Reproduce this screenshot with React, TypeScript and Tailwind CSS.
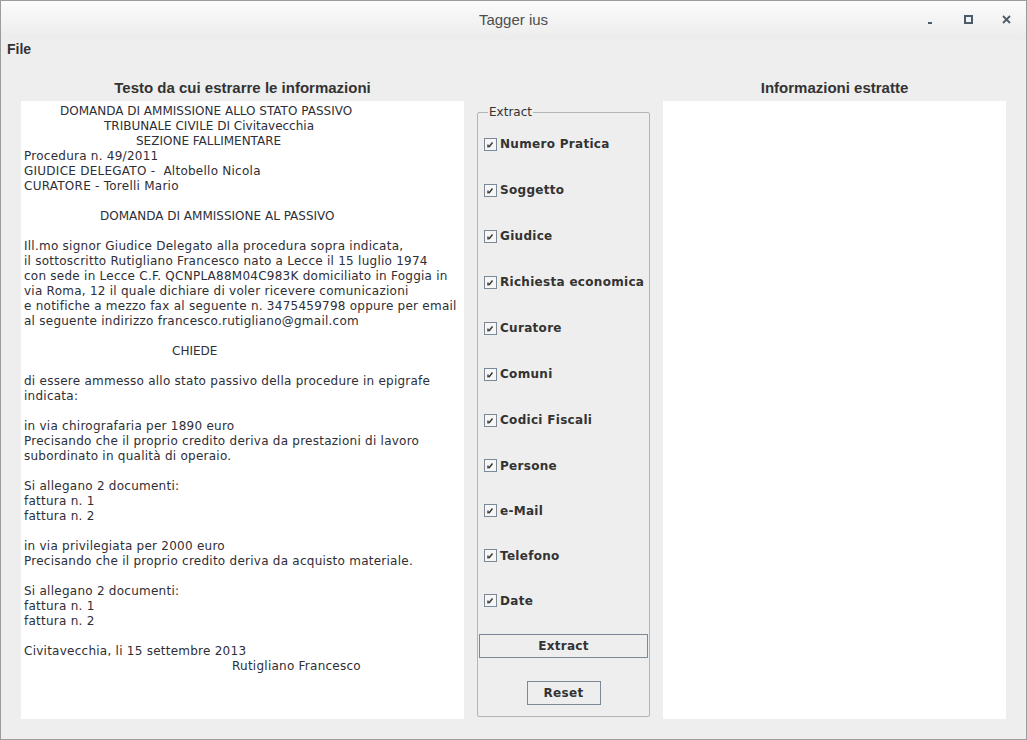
import React from 'react';

const docLines: { text: string; indent?: number; caps?: boolean }[] = [
    { text: 'DOMANDA DI AMMISSIONE ALLO STATO PASSIVO', indent: 36, caps: true },
    { text: 'TRIBUNALE CIVILE DI Civitavecchia', indent: 80, caps: true },
    { text: 'SEZIONE FALLIMENTARE', indent: 112, caps: true },
    { text: 'Procedura n. 49/2011' },
    { text: 'GIUDICE DELEGATO -  Altobello Nicola' },
    { text: 'CURATORE - Torelli Mario' },
    { text: '' },
    { text: 'DOMANDA DI AMMISSIONE AL PASSIVO', indent: 76, caps: true },
    { text: '' },
    { text: 'Ill.mo signor Giudice Delegato alla procedura sopra indicata,' },
    { text: 'il sottoscritto Rutigliano Francesco nato a Lecce il 15 luglio 1974' },
    { text: 'con sede in Lecce C.F. QCNPLA88M04C983K domiciliato in Foggia in' },
    { text: 'via Roma, 12 il quale dichiare di voler ricevere comunicazioni' },
    { text: 'e notifiche a mezzo fax al seguente n. 3475459798 oppure per email' },
    { text: 'al seguente indirizzo francesco.rutigliano@gmail.com' },
    { text: '' },
    { text: 'CHIEDE', indent: 148, caps: true },
    { text: '' },
    { text: 'di essere ammesso allo stato passivo della procedure in epigrafe' },
    { text: 'indicata:' },
    { text: '' },
    { text: 'in via chirografaria per 1890 euro' },
    { text: 'Precisando che il proprio credito deriva da prestazioni di lavoro' },
    { text: 'subordinato in qualità di operaio.' },
    { text: '' },
    { text: 'Si allegano 2 documenti:' },
    { text: 'fattura n. 1' },
    { text: 'fattura n. 2' },
    { text: '' },
    { text: 'in via privilegiata per 2000 euro' },
    { text: 'Precisando che il proprio credito deriva da acquisto materiale.' },
    { text: '' },
    { text: 'Si allegano 2 documenti:' },
    { text: 'fattura n. 1' },
    { text: 'fattura n. 2' },
    { text: '' },
    { text: 'Civitavecchia, li 15 settembre 2013' },
    { text: 'Rutigliano Francesco', indent: 208 },
];

const options = [
    { label: 'Numero Pratica', h: 'h-[46px]' },
    { label: 'Soggetto', h: 'h-[46px]' },
    { label: 'Giudice', h: 'h-[46px]' },
    { label: 'Richiesta economica', h: 'h-[46px]' },
    { label: 'Curatore', h: 'h-[46px]' },
    { label: 'Comuni', h: 'h-[46px]' },
    { label: 'Codici Fiscali', h: 'h-[46px]' },
    { label: 'Persone', h: 'h-[45px]' },
    { label: 'e-Mail', h: 'h-[45px]' },
    { label: 'Telefono', h: 'h-[45px]' },
    { label: 'Date', h: 'h-[45px]' },
];

const CheckBox = () => (
    <svg width="13" height="13" viewBox="0 0 13 13" className="shrink-0">
        <rect x="0.5" y="0.5" width="12" height="12" fill="#f6f6f6" stroke="#7b8896" />
        <path d="M4 6.5 L4 9.5 M5 9 L8.5 4.5" stroke="#333" strokeWidth="1.4" fill="none" />
    </svg>
);

const App = () => {
    return (
        <div className="w-[1027px] h-[740px] border border-[#9c9c9c] bg-[#eeeeee] flex flex-col overflow-hidden text-[#333]">
            {/* title bar */}
            <div className="h-[38px] shrink-0 bg-gradient-to-b from-[#fbfbfb] to-[#ececec] relative flex items-center justify-center">
                <span className="text-[15px] text-[#4d4d4d] font-['Liberation_Sans',sans-serif]">Tagger ius</span>
                <div className="absolute right-[15px] top-[14px] flex items-center gap-[29px]">
                    <svg width="9" height="9" viewBox="0 0 9 9">
                        <rect x="2" y="7" width="4" height="2" fill="#4b5b67" />
                    </svg>
                    <svg width="9" height="9" viewBox="0 0 9 9">
                        <rect x="1" y="1" width="7" height="7" fill="none" stroke="#4b5b67" strokeWidth="2" />
                    </svg>
                    <svg width="9" height="9" viewBox="0 0 9 9">
                        <path d="M1 1 L8 8 M8 1 L1 8" stroke="#4b5b67" strokeWidth="1.8" />
                    </svg>
                </div>
            </div>

            {/* menu bar */}
            <div className="h-[20px] shrink-0 px-[6px] flex items-center">
                <span className="text-[14px] font-bold font-['Liberation_Sans',sans-serif]">File</span>
            </div>

            {/* content */}
            <div className="flex flex-row gap-[13px] px-[20px]">
                <div className="w-[443px] flex flex-col">
                    <div className="h-[42px] pt-[20px] text-center text-[15px] leading-[18px] font-bold font-['Liberation_Sans',sans-serif]">
                        Testo da cui estrarre le informazioni
                    </div>
                    <div className="h-[618px] bg-white pt-[3px] pl-[3px] font-['DejaVu_Sans',sans-serif] text-[12px] leading-[15px] text-[#2e2e36]">
                        {docLines.map((line, i) => (
                            <div
                                key={i}
                                className={line.caps ? 'h-[15px] whitespace-pre' : 'h-[15px] whitespace-pre tracking-[0.25px]'}
                                style={line.indent ? { paddingLeft: line.indent } : undefined}
                            >
                                {line.text}
                            </div>
                        ))}
                    </div>
                </div>

                <div className="w-[173px] pt-[46px]">
                    <fieldset className="h-[612px] border border-[#b4b4b4] rounded-[2px] pl-[6px] pr-[1px] font-['DejaVu_Sans',sans-serif] text-[12px]">
                        <legend className="ml-[4px] px-[1px] leading-[14px] text-[#333]">Extract</legend>
                        <div className="pt-[2px] flex flex-col">
                            {options.map(o => (
                                <div key={o.label} className={`${o.h} flex items-center gap-[3px]`}>
                                    <CheckBox />
                                    <span className="font-bold leading-[14px] tracking-[0.3px]">{o.label}</span>
                                </div>
                            ))}
                        </div>
                        <div className="-ml-[5px] mt-[11px] h-[24px] border border-[#7b8896] flex items-center justify-center font-bold tracking-[0.3px]">
                            Extract
                        </div>
                        <div className="mt-[23px] flex justify-center -ml-[5px]">
                            <div className="w-[74px] h-[24px] border border-[#7b8896] flex items-center justify-center font-bold tracking-[0.3px]">
                                Reset
                            </div>
                        </div>
                    </fieldset>
                </div>

                <div className="w-[343px] flex flex-col">
                    <div className="h-[42px] pt-[20px] text-center text-[15px] leading-[18px] font-bold font-['Liberation_Sans',sans-serif]">
                        Informazioni estratte
                    </div>
                    <div className="h-[618px] bg-white" />
                </div>
            </div>
        </div>
    );
};

export default App;
